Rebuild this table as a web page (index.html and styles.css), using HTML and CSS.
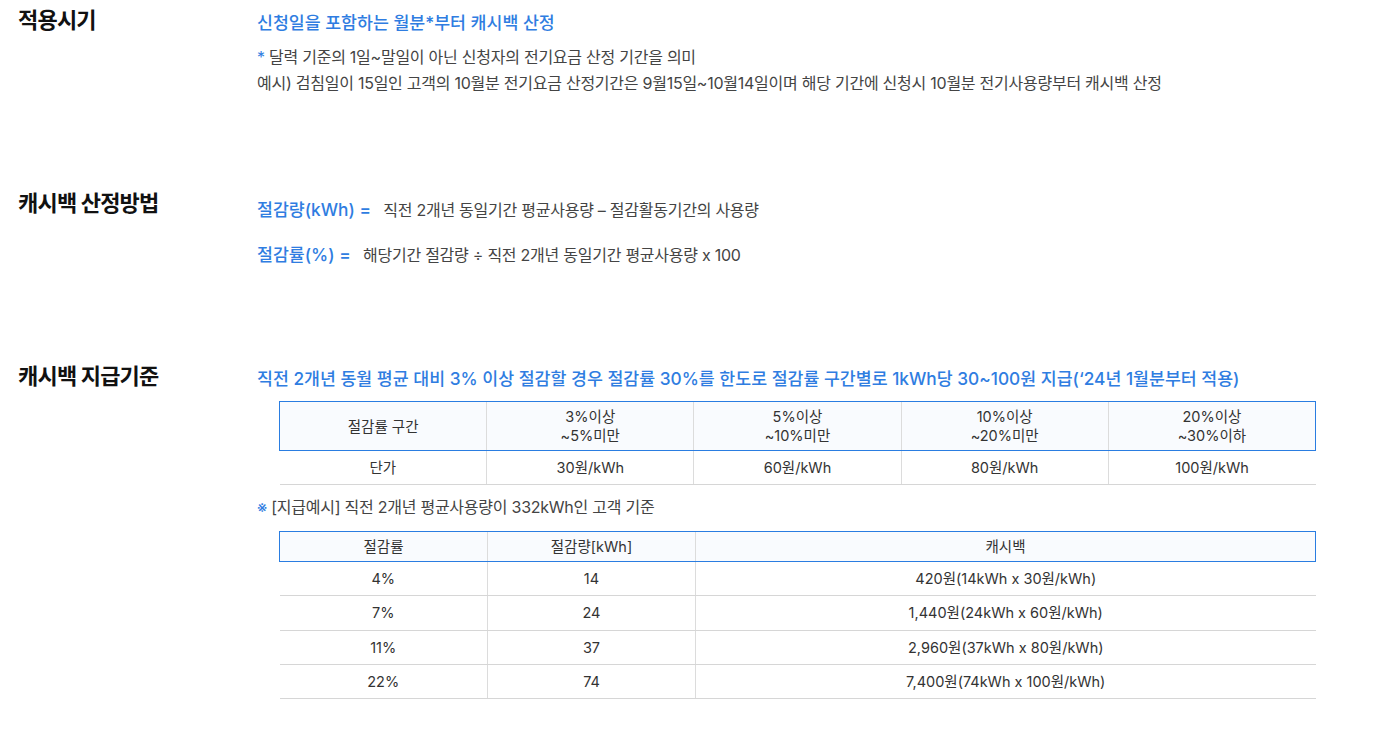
FILE: index.html
```html
<!DOCTYPE html>
<html lang="ko">
<head>
    <meta charset="UTF-8">
    <title>캐시백 안내</title>
    <link rel="stylesheet" href="styles.css">
</head>
<body>

<!-- 적용시기 -->
<div class="sec sec-first">
    <h3 class="sec-tit">적용시기</h3>
    <div class="sec-con">
        <p class="blue-tit">신청일을 포함하는 월분*부터 캐시백 산정</p>
        <p class="txt"><span class="mark">*</span> 달력 기준의 1일~말일이 아닌 신청자의 전기요금 산정 기간을 의미</p>
        <p class="txt">예시) 검침일이 15일인 고객의 10월분 전기요금 산정기간은 9월15일~10월14일이며 해당 기간에 신청시 10월분 전기사용량부터 캐시백 산정</p>
    </div>
</div>

<!-- 캐시백 산정방법 -->
<div class="sec sec-calc">
    <h3 class="sec-tit">캐시백 산정방법</h3>
    <div class="sec-con">
        <p class="formula"><span class="f-name">절감량(kWh) =</span> 직전 2개년 동일기간 평균사용량 – 절감활동기간의 사용량</p>
        <p class="formula"><span class="f-name">절감률(%) =</span> 해당기간 절감량 ÷ 직전 2개년 동일기간 평균사용량 x 100</p>
    </div>
</div>

<!-- 캐시백 지급기준 -->
<div class="sec sec-pay">
    <h3 class="sec-tit">캐시백 지급기준</h3>
    <div class="sec-con">
        <p class="blue-tit">직전 2개년 동월 평균 대비 3% 이상 절감할 경우 절감률 30%를 한도로 절감률 구간별로 1kWh당 30~100원 지급(‘24년 1월분부터 적용)</p>
        <table class="tbl tbl-rate">
            <thead>
            <tr>
                <th>절감률 구간</th>
                <th>3%이상<br>~5%미만</th>
                <th>5%이상<br>~10%미만</th>
                <th>10%이상<br>~20%미만</th>
                <th>20%이상<br>~30%이하</th>
            </tr>
            </thead>
            <tbody>
            <tr>
                <td>단가</td>
                <td>30원/kWh</td>
                <td>60원/kWh</td>
                <td>80원/kWh</td>
                <td>100원/kWh</td>
            </tr>
            </tbody>
        </table>
        <p class="txt note"><span class="mark">※</span> [지급예시] 직전 2개년 평균사용량이 332kWh인 고객 기준</p>
        <table class="tbl tbl-ex">
            <thead>
            <tr>
                <th class="w1">절감률</th>
                <th class="w1">절감량[kWh]</th>
                <th>캐시백</th>
            </tr>
            </thead>
            <tbody>
            <tr><td>4%</td><td>14</td><td>420원(14kWh x 30원/kWh)</td></tr>
            <tr><td>7%</td><td>24</td><td>1,440원(24kWh x 60원/kWh)</td></tr>
            <tr><td>11%</td><td>37</td><td>2,960원(37kWh x 80원/kWh)</td></tr>
            <tr><td>22%</td><td>74</td><td>7,400원(74kWh x 100원/kWh)</td></tr>
            </tbody>
        </table>
    </div>
</div>

</body>
</html>
```

FILE: styles.css
```css
* {
    margin: 0;
    padding: 0;
}

body {
    background: #fff;
    color: #333;
    font-family: Inter, "Noto Sans CJK KR", sans-serif;
}

.sec {
    display: grid;
    grid-template-columns: 257px 1fr;
}

.sec-first {
    padding-top: 5px;
}

.sec-calc {
    margin-top: 92px;
}

.sec-pay {
    margin-top: 91px;
}

.sec-tit {
    padding-left: 18px;
    font-size: 22px;
    line-height: 30px;
    font-weight: 700;
    color: #111;
    letter-spacing: -0.8px;
}

.blue-tit {
    margin-top: 3px;
    font-size: 17.3px;
    line-height: 30px;
    font-weight: 500;
    color: #2f7de1;
}

.txt {
    font-size: 16px;
    line-height: 26px;
    color: #444;
    letter-spacing: -0.25px;
}

.blue-tit + .txt {
    margin-top: 6px;
}

.mark {
    color: #2f7de1;
}

.formula {
    margin-top: 7px;
    font-size: 16px;
    line-height: 30px;
    color: #444;
    letter-spacing: -0.25px;
}

.formula + .formula {
    margin-top: 15px;
}

.f-name {
    margin-right: 8px;
    font-size: 17.3px;
    font-weight: 500;
    color: #2f7de1;
    letter-spacing: 0;
}

.sec-pay .blue-tit {
    margin-top: 3px;
}

.tbl {
    width: 1037px;
    margin-left: 22px;
    border-collapse: collapse;
    table-layout: fixed;
    font-size: 14.5px;
    color: #333;
    text-align: center;
}

.tbl-rate {
    margin-top: 7px;
}

.tbl th {
    padding: 5px 0;
    line-height: 19px;
    font-weight: 400;
    background: #f9fbfe;
    border-top: 1px solid #2a7de1;
    border-bottom: 1px solid #2a7de1;
}

.tbl th:first-child {
    border-left: 1px solid #2a7de1;
}

.tbl th:last-child {
    border-right: 1px solid #2a7de1;
}

.tbl th + th {
    border-left: 1px solid #dcdcdc;
}

.tbl td {
    padding: 7px 0 6px;
    line-height: 20px;
    border-bottom: 1px solid #d6d6d6;
}

.tbl td + td {
    border-left: 1px solid #dcdcdc;
}

.note {
    margin-top: 9px;
}

.tbl-ex {
    margin-top: 11px;
}

.tbl-ex tbody td {
    padding-bottom: 6.3px;
}

.tbl-ex .w1 {
    width: 207px;
}
```
